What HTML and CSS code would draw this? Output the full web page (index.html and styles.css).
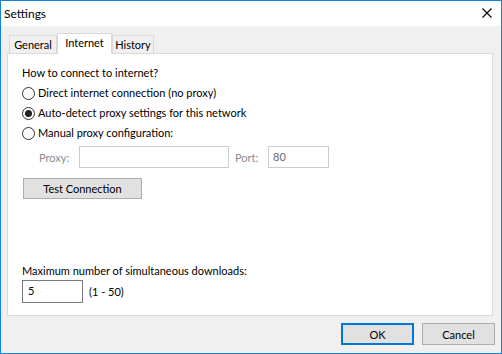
FILE: index.html
```html
<!DOCTYPE html>
<html lang="en">
<head>
    <meta charset="UTF-8">
    <title>Settings</title>
    <link rel="stylesheet" href="styles.css">
</head>
<body>
    <div class="window">
        <div class="titlebar">
            <span class="title">Settings</span>
            <svg class="close" width="10" height="10" viewBox="0 0 10 10">
                <path d="M0.5 0.5 L9.5 9.5 M9.5 0.5 L0.5 9.5" stroke="#000" stroke-width="1.1" fill="none"/>
            </svg>
        </div>
        <div class="tabs">
            <div class="tab tab-general">General</div>
            <div class="tab tab-internet active">Internet</div>
            <div class="tab tab-history">History</div>
        </div>
        <div class="panel">
            <div class="row">How to connect to internet?</div>
            <label class="row radio"><span class="circle"></span>Direct internet connection (no proxy)</label>
            <label class="row radio"><span class="circle checked"></span>Auto-detect proxy settings for this network</label>
            <label class="row radio"><span class="circle"></span>Manual proxy configuration:</label>
            <div class="proxy-row">
                <span class="disabled-label proxy-label">Proxy:</span>
                <div class="field proxy-field"></div>
                <span class="disabled-label port-label">Port:</span>
                <div class="field port-field">80</div>
            </div>
            <button class="btn test-btn">Test Connection</button>
            <div class="spacer"></div>
            <div class="max-label">Maximum number of simultaneous downloads:</div>
            <div class="max-row">
                <div class="num-field">5</div>
                <span class="range">(1 - 50)</span>
            </div>
        </div>
        <div class="footer">
            <button class="btn ok-btn">OK</button>
            <button class="btn">Cancel</button>
        </div>
    </div>
</body>
</html>
```

FILE: styles.css
```css
* {
    margin: 0;
    padding: 0;
    box-sizing: border-box;
    font-family: 'Lato', 'Noto Sans', sans-serif;
    font-size: 11px;
}
body {
    background: #f0f0f0;
}
.window {
    width: 502px;
    height: 354px;
    border: 1px solid #1883d7;
    background: #f0f0f0;
    display: flex;
    flex-direction: column;
    color: #000;
}
.titlebar {
    height: 25px;
    background: white;
    display: flex;
    align-items: center;
    justify-content: space-between;
    padding: 0 9px 1px 3px;
}
.title {
    font-size: 12px;
}
.tabs {
    display: flex;
    align-items: flex-end;
    height: 20px;
    margin: 7px 0 0 8px;
    position: relative;
    z-index: 1;
}
.tab {
    height: 18px;
    border: 1px solid #d9d9d9;
    border-bottom: none;
    background: #f0f0f0;
    display: flex;
    align-items: center;
    justify-content: center;
    line-height: 16px;
    padding-top: 1px;
}
.tab-general {
    width: 48px;
}
.tab-internet {
    width: 55px;
}
.tab-history {
    width: 42px;
}
.tab.active {
    height: 21px;
    background: white;
    margin-bottom: -1px;
    align-items: flex-start;
    padding-top: 1px;
}
.panel {
    margin-left: 6px;
    width: 486px;
    height: 263px;
    background: white;
    border: 1px solid #d9d9d9;
    padding: 9px 14px 0 14px;
    display: flex;
    flex-direction: column;
}
.row {
    height: 20px;
    line-height: 20px;
    display: flex;
    align-items: center;
}
.circle {
    width: 13px;
    height: 13px;
    border: 1px solid #333;
    border-radius: 50%;
    margin-right: 3px;
    position: relative;
    flex-shrink: 0;
}
.circle.checked::after {
    content: "";
    position: absolute;
    left: 2px;
    top: 2px;
    width: 7px;
    height: 7px;
    border-radius: 50%;
    background: #222;
}
.proxy-row {
    display: flex;
    align-items: center;
    height: 22px;
    margin-top: 3px;
}
.disabled-label {
    color: #8c8c8c;
}
.proxy-label {
    margin-left: 17px;
    width: 40px;
}
.port-label {
    margin-left: 6px;
    width: 33px;
}
.field {
    height: 22px;
    border: 1px solid #cccccc;
    color: #6d6d6d;
    padding: 1px 0 0 4px;
    line-height: 18px;
}
.proxy-field {
    width: 150px;
}
.port-field {
    width: 61px;
}
.btn {
    width: 73px;
    height: 22px;
    background: #e1e1e1;
    border: 1px solid #adadad;
    color: #000;
}
.test-btn {
    width: 119px;
    height: 21px;
    margin: 10px 0 0 1px;
    line-height: 18px;
}
.spacer {
    flex: 1;
}
.max-label {
    line-height: 16px;
}
.max-row {
    display: flex;
    align-items: center;
    margin-top: 1px;
    margin-bottom: 12px;
}
.num-field {
    width: 61px;
    height: 23px;
    border: 1px solid #7a7a7a;
    padding: 1px 0 0 5px;
    line-height: 18px;
}
.range {
    margin-left: 6px;
}
.footer {
    display: flex;
    justify-content: flex-end;
    gap: 8px;
    margin-top: 7px;
    padding-right: 6px;
}
.ok-btn {
    border: 2px solid #0078d7;
}
```
